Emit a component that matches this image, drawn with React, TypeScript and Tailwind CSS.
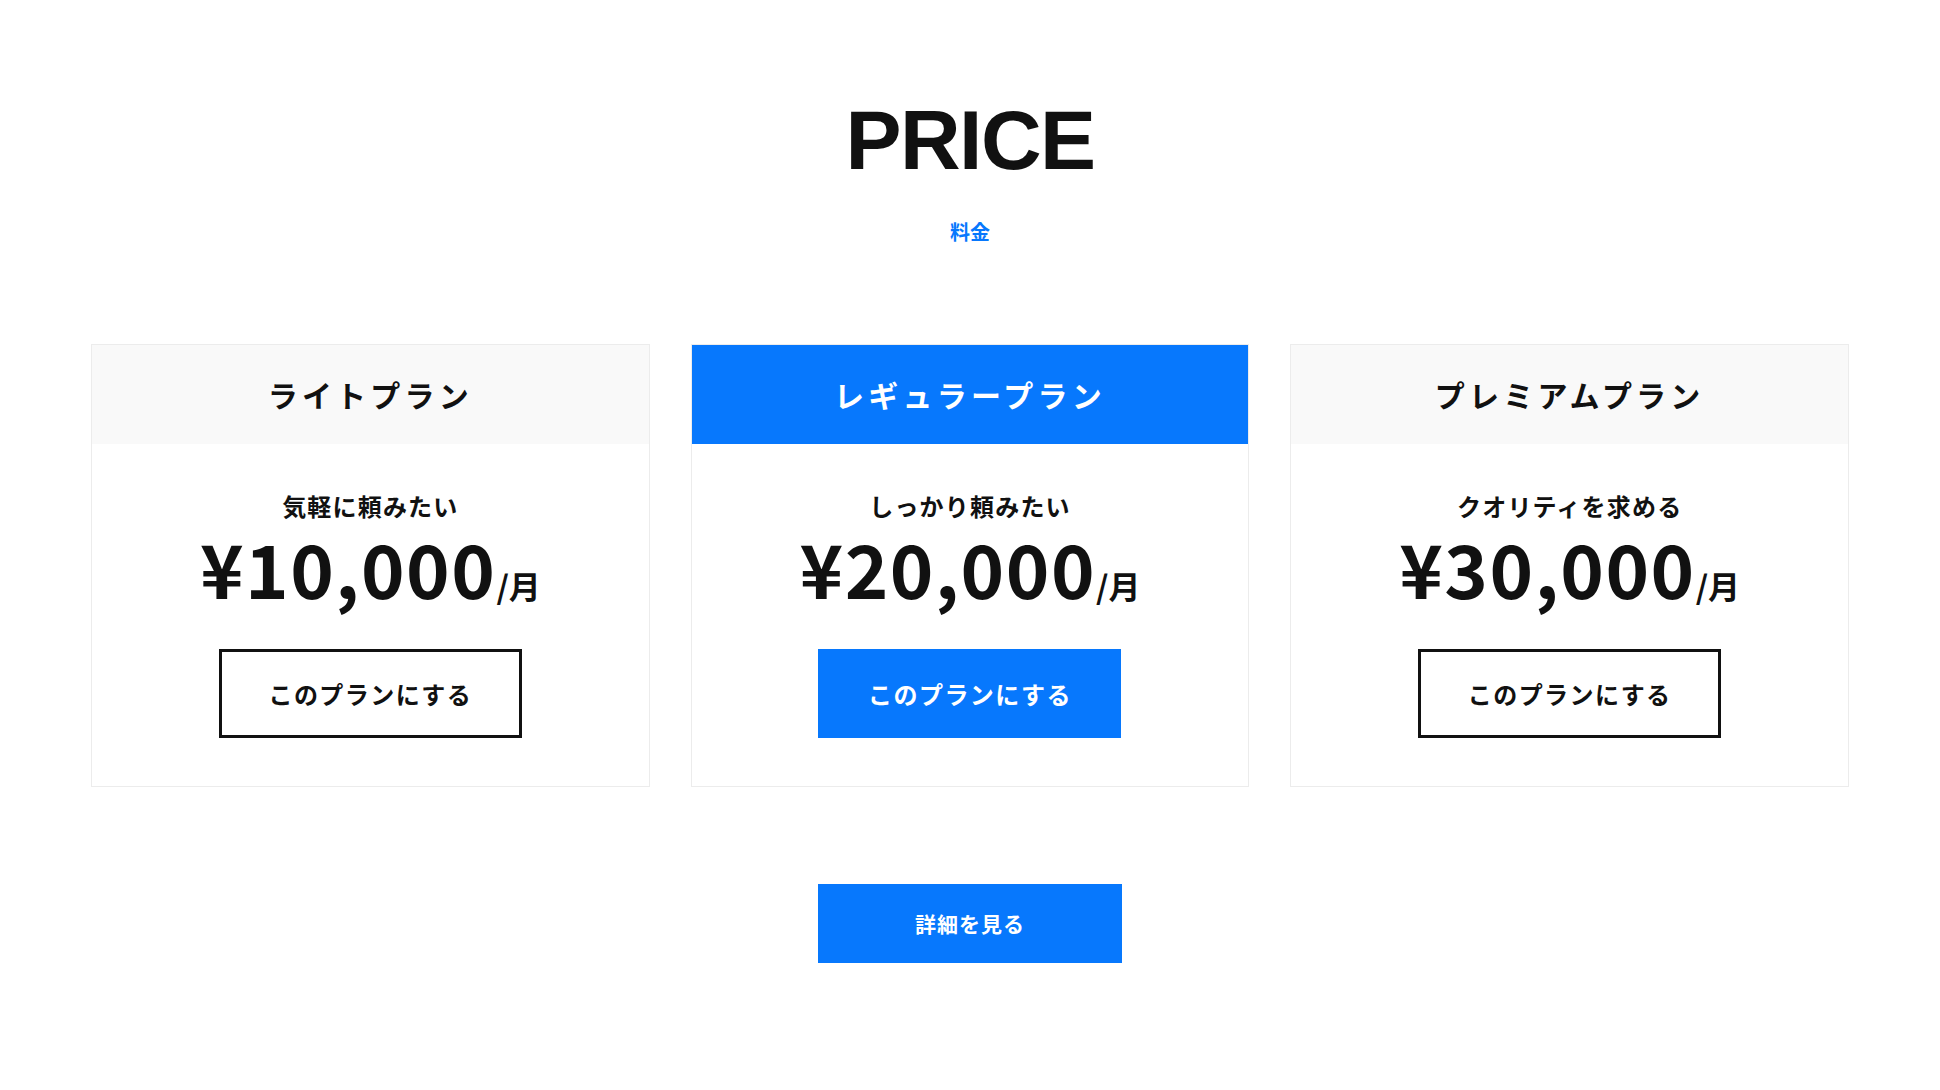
import React from 'react';

const plans = [
  { name: 'ライトプラン', catch: '気軽に頼みたい', price: '¥10,000', featured: false },
  { name: 'レギュラープラン', catch: 'しっかり頼みたい', price: '¥20,000', featured: true },
  { name: 'プレミアムプラン', catch: 'クオリティを求める', price: '¥30,000', featured: false },
];

const jp = "font-['Noto_Sans_CJK_JP','Noto_Sans',sans-serif]";

const PlanCard = ({ plan }: { plan: (typeof plans)[number] }) => {
  return (
    <div className="flex flex-col border border-[#ececec] bg-white">
      <div
        className={
          plan.featured
            ? 'flex h-[99px] items-center justify-center bg-[#0778fd] text-white'
            : 'flex h-[99px] items-center justify-center bg-[#f9f9f9] text-[#111]'
        }
      >
        <h3 className="text-[30px] font-bold tracking-[0.14em]">{plan.name}</h3>
      </div>
      <div className="flex flex-col items-center pt-[48px] pb-[48px] text-[#111]">
        <p className="text-[24px] font-bold leading-[28px] tracking-[0.05em]">{plan.catch}</p>
        <p className="mt-[10px] flex items-baseline leading-none">
          <span className="text-[74px] font-bold tracking-[1.5px]">{plan.price}</span>
          <span className="text-[32px] font-bold">/月</span>
        </p>
        <button
          className={
            plan.featured
              ? 'mt-[45px] h-[89px] w-[303px] bg-[#0778fd] text-[24px] font-bold tracking-[0.06em] text-white'
              : 'mt-[45px] h-[89px] w-[303px] border-[3px] border-[#111] bg-white text-[24px] font-bold tracking-[0.06em] text-[#111]'
          }
        >
          このプランにする
        </button>
      </div>
    </div>
  );
};

const App = () => {
  return (
    <div className={`min-h-screen bg-white ${jp}`}>
      <section className="flex flex-col items-center pt-[98px] pb-[120px]">
        <h2 className="font-['Liberation_Sans',Arial,sans-serif] text-[84px] font-bold leading-none tracking-[-1.5px] text-[#111]">
          PRICE
        </h2>
        <p className="mt-[35px] text-[20px] font-bold text-[#0778fd]">料金</p>
        <div className="mt-[97px] grid w-[1758px] grid-cols-3 gap-[41px]">
          {plans.map((plan) => (
            <PlanCard key={plan.name} plan={plan} />
          ))}
        </div>
        <button className="mt-[97px] h-[79px] w-[304px] bg-[#0778fd] text-[21px] font-bold tracking-[0.05em] text-white">
          詳細を見る
        </button>
      </section>
    </div>
  );
};

export default App;
